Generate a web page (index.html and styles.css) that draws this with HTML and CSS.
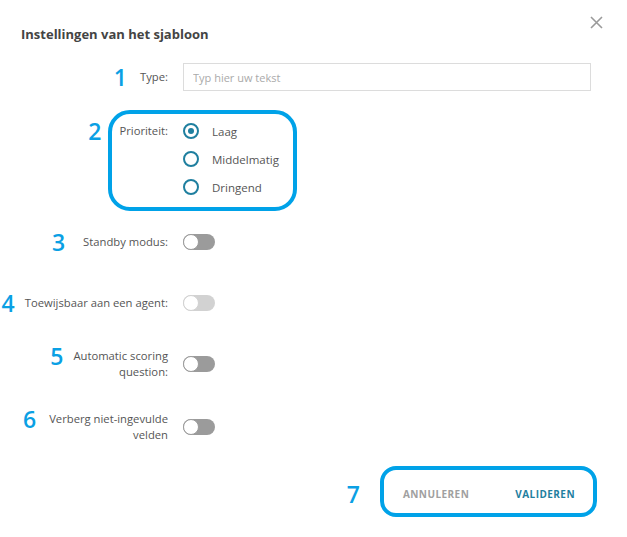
FILE: index.html
```html
<!DOCTYPE html>
<html lang="nl">
<head>
    <meta charset="UTF-8">
    <meta name="viewport" content="width=device-width, initial-scale=1.0">
    <title>Instellingen van het sjabloon</title>
    <link rel="stylesheet" href="styles.css">
</head>
<body>
    <div class="dialog">
        <button class="close" type="button" aria-label="Sluiten">
            <svg width="13" height="13" viewBox="0 0 13 13"><path d="M1 1L12 12M12 1L1 12" stroke="#9a9a9a" stroke-width="1.6" fill="none"/></svg>
        </button>
        <h2 class="title">Instellingen van het sjabloon</h2>

        <form class="form">
            <div class="row row-type">
                <label class="field-label" for="type"><span class="mark">1</span><span>Type:</span></label>
                <input id="type" class="text-input" type="text" placeholder="Typ hier uw tekst">
            </div>

            <div class="row row-priority">
                <span class="callout"></span>
                <div class="field-label label-top wide"><span class="mark">2</span><span>Prioriteit:</span></div>
                <div class="radios">
                    <div class="radio"><span class="circle checked"></span>Laag</div>
                    <div class="radio"><span class="circle"></span>Middelmatig</div>
                    <div class="radio"><span class="circle"></span>Dringend</div>
                </div>
            </div>

            <div class="row row-standby">
                <div class="field-label wide"><span class="mark">3</span><span>Standby modus:</span></div>
                <span class="toggle"><span class="knob"></span></span>
            </div>

            <div class="row row-agent">
                <div class="field-label tight"><span class="mark">4</span><span>Toewijsbaar aan een agent:</span></div>
                <span class="toggle disabled"><span class="knob"></span></span>
            </div>

            <div class="row row-scoring">
                <div class="field-label tight"><span class="mark">5</span><span>Automatic scoring<br>question:</span></div>
                <span class="toggle"><span class="knob"></span></span>
            </div>

            <div class="row row-hide">
                <div class="field-label"><span class="mark">6</span><span>Verberg niet-ingevulde<br>velden</span></div>
                <span class="toggle"><span class="knob"></span></span>
            </div>

            <div class="footer">
                <span class="mark">7</span>
                <div class="actions">
                    <button type="button" class="btn btn-cancel">Annuleren</button>
                    <button type="submit" class="btn btn-ok">Valideren</button>
                </div>
            </div>
        </form>
    </div>
</body>
</html>
```

FILE: styles.css
```css
* { box-sizing: border-box; }
body { margin: 0; background: #fff; font-family: "Open Sans", Arial, sans-serif; color: #555; }

.dialog { position: relative; width: 627px; height: 537px; padding-top: 25px; }
.close { position: absolute; top: 16px; right: 24px; padding: 0; border: none; background: none; line-height: 0; cursor: pointer; }
.title { margin: 0 0 20px 21px; font-size: 13px; line-height: 18px; font-weight: 700; color: #444; }

.row { display: grid; grid-template-columns: 168px 1fr; column-gap: 15px; align-items: center; padding-right: 36px; }
.row-priority { position: relative; align-items: start; margin-top: 26px; }
.row-standby { margin-top: 33px; }
.row-agent { margin-top: 45px; }
.row-scoring { margin-top: 37px; }
.row-hide { margin-top: 31px; }

.field-label { display: flex; justify-content: flex-end; align-items: flex-start; gap: 13px; font-size: 11.25px; line-height: 16px; text-align: right; white-space: nowrap; color: #555; }
.field-label.tight { gap: 10px; }
.field-label.wide { gap: 18px; }
.label-top { padding-top: 6px; }

.mark { flex-shrink: 0; font-size: 23px; line-height: 16px; color: #0aa0e4; font-weight: 600; }

.text-input { height: 28px; width: 100%; border: 1px solid #dcdcdc; padding: 0 9px; font-family: inherit; font-size: 11px; color: #555; outline: none; }
.text-input::placeholder { color: #aaa; }

.callout { position: absolute; left: 108px; top: -7px; width: 189px; height: 101px; border: 4px solid #00a2e8; border-radius: 22px; }

.radios { display: flex; flex-direction: column; }
.radio { display: flex; align-items: center; gap: 13px; height: 28px; font-size: 11.5px; color: #555; }
.circle { display: flex; align-items: center; justify-content: center; width: 16px; height: 16px; border: 2px solid #1f7f9f; border-radius: 50%; }
.circle.checked::after { content: ""; width: 6px; height: 6px; border-radius: 50%; background: #1f7f9f; }

.toggle { display: flex; width: 32px; height: 16px; border-radius: 8px; background: #9b9b9b; }
.toggle .knob { width: 16px; height: 16px; border-radius: 50%; background: #fff; border: 1.5px solid #9b9b9b; }
.toggle.disabled { background: #d2d2d2; }
.toggle.disabled .knob { border-color: #d2d2d2; }

.footer { display: flex; justify-content: flex-end; align-items: center; gap: 20px; margin-top: 23px; padding-right: 30px; }
.footer .mark { padding-top: 4px; }
.actions { display: flex; align-items: center; gap: 46px; height: 51px; padding: 4px 18px 0 19px; border: 4px solid #00a2e8; border-radius: 16px; }
.btn { padding: 0; border: none; background: none; font-family: inherit; font-size: 10px; font-weight: 700; letter-spacing: 0.45px; text-transform: uppercase; cursor: pointer; }
.btn-cancel { color: #a0a0a0; }
.btn-ok { color: #1f7f9f; }
```
